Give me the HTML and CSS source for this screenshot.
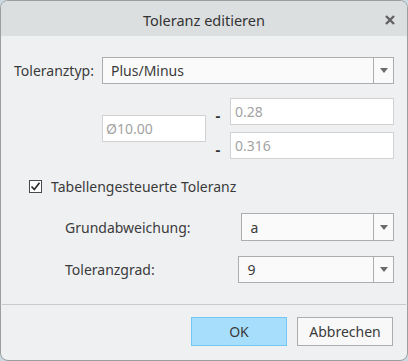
FILE: index.html
```html
<!DOCTYPE html>
<html lang="de">
<head>
    <meta charset="UTF-8">
    <title>Toleranz editieren</title>
    <link rel="stylesheet" href="styles.css">
</head>
<body>
    <div class="dialog">
        <div class="titlebar">
            <span></span>
            <h1>Toleranz editieren</h1>
            <span class="close">
                <svg width="10" height="10" viewBox="0 0 10 10"><path d="M1 1 L9 9 M9 1 L1 9" stroke="#626262" stroke-width="2.4"/></svg>
            </span>
        </div>

        <div class="form">
            <div class="row row-type">
                <label>Toleranztyp:</label>
                <div class="select select-wide">
                    <span class="value">Plus/Minus</span>
                    <span class="arrow"></span>
                </div>
            </div>

            <div class="tolerance">
                <div class="field field-nominal">Ø10.00</div>
                <div class="limits">
                    <div class="limit">
                        <span class="sign">-</span>
                        <div class="field field-limit">0.28</div>
                    </div>
                    <div class="limit">
                        <span class="sign">-</span>
                        <div class="field field-limit">0.316</div>
                    </div>
                </div>
            </div>

            <div class="check-row">
                <span class="checkbox">
                    <svg width="11" height="11" viewBox="0 0 11 11"><path d="M1.5 5.5 L4.3 8.5 L9.5 1.8" fill="none" stroke="#2b2b2b" stroke-width="1.7"/></svg>
                </span>
                <span>Tabellengesteuerte Toleranz</span>
            </div>

            <div class="row row-sub row-grund">
                <label>Grundabweichung:</label>
                <div class="select">
                    <span class="value">a</span>
                    <span class="arrow"></span>
                </div>
            </div>

            <div class="row row-sub row-grad">
                <label>Toleranzgrad:</label>
                <div class="select">
                    <span class="value">9</span>
                    <span class="arrow"></span>
                </div>
            </div>
        </div>

        <div class="footer">
            <button class="button button-ok">OK</button>
            <button class="button">Abbrechen</button>
        </div>
    </div>
</body>
</html>
```

FILE: styles.css
```css
:root {
    --text-color: #3b3b3b;
    --muted-color: #a3a3a3;
    --panel-color: #eff0f2;
    --title-color: #dcdfe0;
    --border-color: #adadad;
    --field-border: #d2d2d2;
}

* {
    box-sizing: border-box;
    margin: 0;
    padding: 0;
    font-family: 'Noto Sans', 'Open Sans', sans-serif;
}

body {
    background-color: #c9d9e1;
    width: 408px;
    height: 361px;
    overflow: hidden;
}

.dialog {
    width: 408px;
    height: 361px;
    background-color: var(--panel-color);
    border: 1px solid #9c9fa1;
    border-radius: 8px;
    overflow: hidden;
    color: var(--text-color);
    font-size: 14px;
    display: flex;
    flex-direction: column;
}

.titlebar {
    height: 35px;
    background-color: var(--title-color);
    display: grid;
    grid-template-columns: 40px 1fr 40px;
    align-items: center;
}

.titlebar h1 {
    font-size: 14.5px;
    font-weight: 400;
    text-align: center;
    color: #333333;
    padding-top: 2px;
}

.close {
    display: flex;
    justify-content: center;
    padding-left: 5px;
    padding-top: 2px;
}

.form {
    padding: 21px 13px 0 13px;
    flex: 1;
}

.row {
    display: flex;
    align-items: center;
    height: 27px;
}

.row-type label {
    width: 88px;
}

.select {
    height: 27px;
    background-color: #fafafa;
    border: 1px solid var(--border-color);
    display: flex;
    align-items: center;
}

.select-wide {
    width: 292px;
}

.select .value {
    flex: 1;
    padding-left: 8px;
}

.select .arrow {
    width: 20px;
    height: 100%;
    border-left: 1px solid var(--border-color);
    display: flex;
    align-items: center;
    justify-content: center;
}

.select .arrow::after {
    content: "";
    border-left: 4px solid transparent;
    border-right: 4px solid transparent;
    border-top: 5px solid #6a6a6a;
}

.tolerance {
    margin-top: 14px;
    margin-left: 88px;
    display: flex;
    align-items: center;
    height: 61px;
}

.field {
    height: 27px;
    background-color: #ffffff;
    border: 1px solid var(--field-border);
    color: var(--muted-color);
    padding-left: 4px;
    display: flex;
    align-items: center;
}

.field-nominal {
    width: 104px;
    padding-left: 3px;
}

.limits {
    display: flex;
    flex-direction: column;
    gap: 7px;
}

.limit {
    display: flex;
    align-items: center;
}

.sign {
    width: 24px;
    text-align: center;
    font-weight: 700;
    font-size: 15px;
    color: #333333;
    padding-top: 6px;
}

.field-limit {
    width: 164px;
}

.check-row {
    margin-top: 17px;
    height: 20px;
    padding-left: 15px;
    display: flex;
    align-items: center;
    gap: 9px;
}

.checkbox {
    width: 13px;
    height: 13px;
    background-color: #ffffff;
    border: 1px solid #4a4a4a;
    display: flex;
    align-items: center;
    justify-content: center;
}

.row-sub {
    padding-left: 51px;
}

.row-grund {
    margin-top: 17px;
    height: 28px;
}

.row-grund label {
    width: 177px;
}

.row-grund .select {
    width: 153px;
    height: 28px;
}

.row-grad {
    margin-top: 15px;
}

.row-grad label {
    width: 174px;
}

.row-grad .select {
    width: 156px;
}

.footer {
    margin: 0 1px;
    border-top: 1px solid #c9cacc;
    height: 56px;
    padding: 12px 13px 0 0;
    display: flex;
    justify-content: flex-end;
    align-items: flex-start;
    gap: 10px;
}

.button {
    width: 96px;
    height: 29px;
    border: 1px solid var(--border-color);
    background-color: #f8f8f8;
    color: var(--text-color);
    font-size: 14px;
}

.button-ok {
    background-color: #a6defc;
    border-color: #74c6f3;
}
```
